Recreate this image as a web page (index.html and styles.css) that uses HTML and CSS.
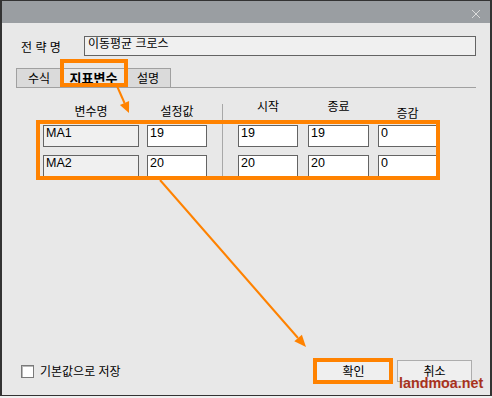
FILE: index.html
```html
<!DOCTYPE html>
<html lang="ko">
<head>
  <meta charset="UTF-8">
  <title>지표변수</title>
  <link rel="stylesheet" href="styles.css">
</head>
<body>
  <div class="window">
    <div class="titlebar">
      <svg class="close" width="10" height="10" viewBox="0 0 10 10">
        <path d="M1 1 L9 9 M9 1 L1 9" stroke="#dcdcdc" stroke-width="1" fill="none"/>
      </svg>
    </div>

    <div class="content">
      <div class="name-row">
        <span class="label">전 략 명</span>
        <div class="textbox">이동평균 크로스</div>
      </div>

      <div class="tabs">
        <div class="tab">수식</div>
        <div class="tab active">지표변수</div>
        <div class="tab">설명</div>
      </div>

      <div class="params">
        <div class="head col-name">변수명</div>
        <div class="head col-set">설정값</div>
        <div class="sep"></div>
        <div class="head col-start high">시작</div>
        <div class="head col-end high">종료</div>
        <div class="head col-step low">증감</div>

        <div class="field col-name readonly">MA1</div>
        <div class="field col-set">19</div>
        <div class="field col-start">19</div>
        <div class="field col-end">19</div>
        <div class="field col-step">0</div>

        <div class="field col-name readonly">MA2</div>
        <div class="field col-set">20</div>
        <div class="field col-start">20</div>
        <div class="field col-end">20</div>
        <div class="field col-step">0</div>
      </div>

      <div class="footer">
        <label class="check-label"><span class="check"></span>기본값으로 저장</label>
        <div class="buttons">
          <button class="btn">확인</button>
          <button class="btn">취소</button>
        </div>
      </div>
    </div>

    <!-- 주석 표시 -->
    <div class="mark mark-tab"></div>
    <div class="mark mark-fields"></div>
    <div class="mark mark-ok"></div>
    <svg class="arrows" width="492" height="398" viewBox="0 0 492 398">
      <line x1="117" y1="86" x2="124.5" y2="103" stroke="#ff8200" stroke-width="2"/>
      <polygon points="129,113 119.9,104.9 129.1,100.9" fill="#ff8200"/>
      <line x1="160" y1="180" x2="298" y2="338" stroke="#ff8200" stroke-width="2"/>
      <polygon points="306,347 294.3,341.3 301.9,334.7" fill="#ff8200"/>
    </svg>
    <div class="watermark">landmoa.net</div>
  </div>
</body>
</html>
```

FILE: styles.css
```css
body { margin: 0; background: #f0f0f0; font-family: "Noto Sans CJK KR", sans-serif; font-size: 12px; color: #000; }
.window { position: relative; width: 492px; height: 396px; box-sizing: border-box; border: 2px solid #333; border-top-width: 1px; border-bottom-width: 1px; background: #e8e8e8; display: flex; flex-direction: column; }
.titlebar { height: 22px; background: #9a9ea2; position: relative; }
.close { position: absolute; left: 469px; top: 8px; }
.content { flex: 1; display: flex; flex-direction: column; padding: 0 14px; }

.name-row { display: flex; align-items: center; margin-top: 12px; }
.label { width: 63px; margin-left: 5px; line-height: 20px; padding-top: 2px; }
.textbox { flex: 1; height: 18px; border: 1px solid #646464; background: #f0f0f0; padding-left: 3px; line-height: 12px; }

.tabs { display: flex; margin-top: 11px; border-bottom: 1px solid #a0a0a0; }
.tab { height: 19px; box-sizing: border-box; border: 1px solid #a0a0a0; border-bottom: none; background: #dadada; text-align: center; line-height: 18px; width: 46px; margin-right: -1px; }
.tab.active { width: 65px; background: #e8e8e8; font-weight: bold; font-size: 13px; }

.params { display: grid; grid-template-columns: 104px 75px 16px 70px 70px 59px; grid-template-rows: 13px 22px 22px; row-gap: 8px; margin: 16px 0 0 27px; }
.head { text-align: center; line-height: 14px; padding-top: 0; }
.head.high { margin-top: -5px; }
.head.low { padding-top: 2px; }
.sep { grid-row: 1 / 4; grid-column: 3; border-left: 1px solid #a8a8a8; }
.col-name { width: 96px; }
.col-set { width: 60px; }
.col-start { width: 60px; }
.col-end { width: 61px; }
.col-step { width: 59px; }
.field { box-sizing: border-box; height: 22px; border: 1px solid #646464; background: #fff; padding: 0 2px; font-family: "Liberation Sans", sans-serif; font-size: 12.5px; line-height: 14px; }
.field.readonly { background: #f0f0f0; }

.footer { margin-top: auto; margin-bottom: 13px; display: flex; align-items: center; justify-content: space-between; padding-left: 5px; }
.check-label { display: flex; align-items: center; line-height: 14px; }
.check { width: 11px; height: 11px; border: 1px solid #7a7a7a; box-shadow: inset 1px 1px #b8b8b8; background: #fff; margin-right: 6px; }
.buttons { display: flex; gap: 6px; margin-right: 4px; }
.btn { width: 75px; height: 22px; border: 1px solid #adadad; background: #efefef; font-family: "Noto Sans CJK KR", sans-serif; font-size: 12px; padding: 0; line-height: 18px; }

.mark { position: absolute; box-sizing: border-box; border: 4px solid #ff8200; }
.mark-tab { left: 58px; top: 58px; width: 68px; height: 28px; }
.mark-fields { left: 34px; top: 119px; width: 404px; height: 60px; }
.mark-ok { left: 311px; top: 357px; width: 80px; height: 26px; }
.arrows { position: absolute; left: -2px; top: -1px; }
.watermark { position: absolute; left: 397px; top: 374px; font-family: "Liberation Sans", sans-serif; font-weight: bold; font-size: 14.3px; color: #a8321c; }
```
